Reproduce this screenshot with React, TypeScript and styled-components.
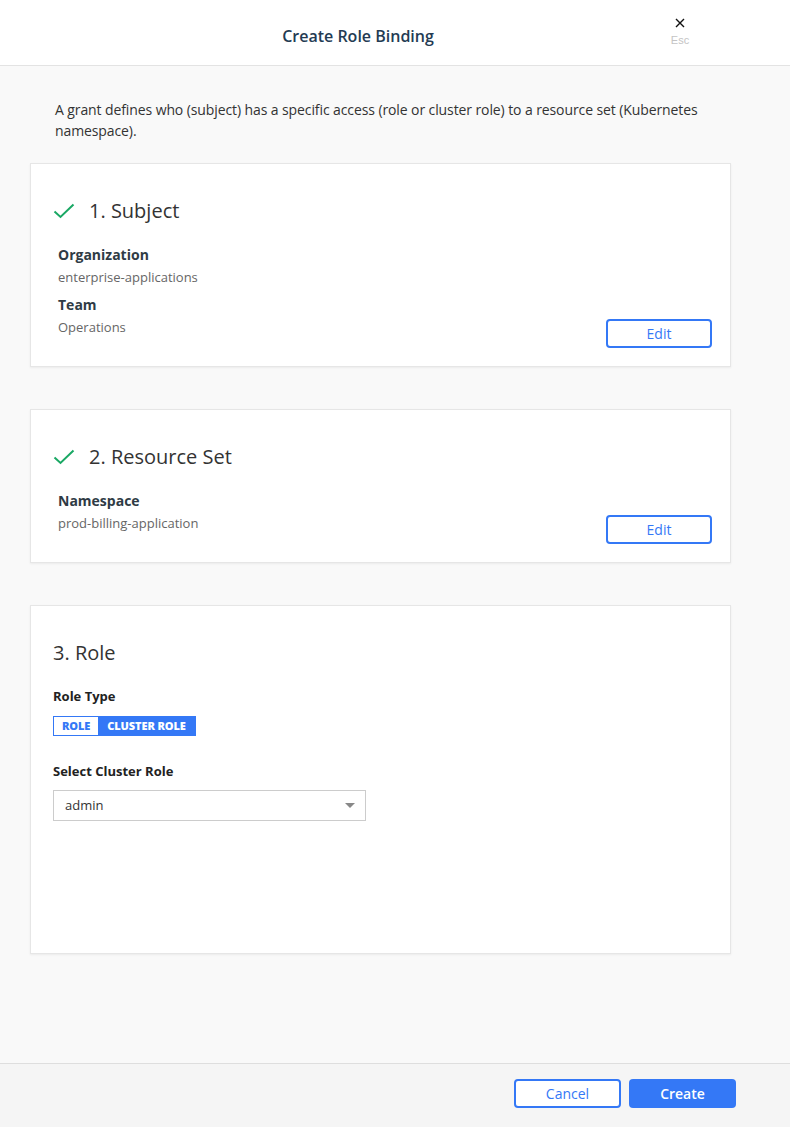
import React, { useState } from 'react';
import styled, { createGlobalStyle } from 'styled-components';

const GlobalStyle = createGlobalStyle`
  html, body {
    margin: 0;
    padding: 0;
    height: 100%;
  }

  body {
    font-family: 'Open Sans', 'Noto Sans', sans-serif;
    background-color: #f9f9f9;
    color: #333;
  }

  #root {
    height: 100%;
  }
`;

const Page = styled.div`
  height: 100vh;
  display: flex;
  flex-direction: column;
`;

const Header = styled.header`
  position: relative;
  flex: 0 0 66px;
  display: flex;
  align-items: center;
  justify-content: center;
  padding: 7px 74px 0 0;
  box-sizing: border-box;
  background-color: #fff;
  border-bottom: 1px solid #e3e3e3;
`;

const Title = styled.h1`
  margin: 0;
  font-size: 16px;
  font-weight: 600;
  color: #243b53;
`;

const CloseButton = styled.button`
  position: absolute;
  top: 18px;
  right: 95px;
  width: 30px;
  display: flex;
  flex-direction: column;
  align-items: center;
  gap: 6px;
  padding: 0;
  border: none;
  background: none;
  cursor: pointer;

  span {
    font-family: 'Liberation Sans', Arial, sans-serif;
    font-size: 11px;
    color: #c4c4c4;
  }
`;

const Main = styled.main`
  flex: 1;
  overflow: auto;
  padding: 33px 59px 40px 30px;
`;

const Intro = styled.p`
  margin: 0 0 22px 25px;
  font-size: 14px;
  line-height: 21px;
  letter-spacing: -0.1px;
  color: #333;
`;

const Cards = styled.div`
  display: flex;
  flex-direction: column;
  gap: 42px;
`;

const Card = styled.section<{ $minHeight?: number }>`
  background-color: #fff;
  border: 1px solid #e6e6e6;
  box-shadow: 0 1px 2px rgba(0, 0, 0, 0.06);
  padding: 33px 18px 18px 22px;
  min-height: ${(p) => (p.$minHeight ? `${p.$minHeight}px` : 'auto')};
  box-sizing: border-box;
`;

const StepTitle = styled.h2<{ $gapBottom?: number }>`
  margin: 0 0 ${(p) => p.$gapBottom ?? 19}px;
  display: flex;
  align-items: center;
  gap: 14px;
  font-size: 20px;
  font-weight: 400;
  line-height: 28px;
  color: #333;
`;

const CardBody = styled.div`
  display: flex;
  justify-content: space-between;
  align-items: flex-end;
  padding-left: 5px;
`;

const Fields = styled.dl`
  margin: 0 0 10px;
  display: flex;
  flex-direction: column;
`;

const FieldLabel = styled.dt`
  font-size: 14px;
  font-weight: 700;
  line-height: 22px;
  color: #2f3b45;
  margin-top: 6px;

  &:first-child {
    margin-top: 0;
  }
`;

const FieldValue = styled.dd`
  margin: 0;
  font-size: 13px;
  line-height: 22px;
  color: #666;
`;

const OutlineButton = styled.button<{ $width?: number }>`
  width: ${(p) => p.$width ?? 106}px;
  height: 29px;
  border: 2px solid #3478f6;
  border-radius: 4px;
  background-color: #fff;
  color: #3478f6;
  font-family: 'Open Sans', sans-serif;
  font-size: 14px;
  cursor: pointer;
`;

const PrimaryButton = styled.button`
  width: 107px;
  height: 29px;
  border: none;
  border-radius: 4px;
  background-color: #3478f6;
  color: #fff;
  font-family: 'Open Sans', sans-serif;
  font-size: 14px;
  font-weight: 600;
  cursor: pointer;
`;

const SectionLabel = styled.div<{ $gapTop: number; $gapBottom: number }>`
  font-size: 13px;
  font-weight: 700;
  line-height: 20px;
  color: #222;
  margin: ${(p) => p.$gapTop}px 0 ${(p) => p.$gapBottom}px;
`;

const Toggle = styled.div`
  display: inline-flex;
  border: 1px solid #3478f6;
  height: 20px;
  box-sizing: border-box;
`;

const ToggleOption = styled.button<{ $active: boolean }>`
  border: none;
  padding: 0 ${(p) => (p.$active ? 9 : 8)}px;
  font-family: 'Open Sans', sans-serif;
  font-size: 11px;
  font-weight: 800;
  letter-spacing: -0.1px;
  background-color: ${(p) => (p.$active ? '#3478f6' : '#fff')};
  color: ${(p) => (p.$active ? '#fff' : '#3478f6')};
  cursor: pointer;
`;

const SelectBox = styled.div`
  width: 313px;
  height: 31px;
  box-sizing: border-box;
  border: 1px solid #ccc;
  display: flex;
  align-items: center;
  justify-content: space-between;
  padding: 0 10px 0 11px;
  font-size: 13px;
  color: #333;
  background-color: #fff;
`;

const Caret = styled.span`
  width: 0;
  height: 0;
  border-left: 5px solid transparent;
  border-right: 5px solid transparent;
  border-top: 5px solid #888;
`;

const Footer = styled.footer`
  flex: 0 0 64px;
  display: flex;
  align-items: flex-start;
  justify-content: flex-end;
  gap: 8px;
  padding: 15px 54px 0 0;
  box-sizing: border-box;
  background-color: #f5f5f5;
  border-top: 1px solid #dedede;
`;

const Check = () => (
  <svg width="22" height="16" viewBox="0 0 22 16" fill="none">
    <path d="M1.5 8.5 L7.5 14 L20.5 1.5" stroke="#1aa864" strokeWidth="2" />
  </svg>
);

const CloseIcon = () => (
  <svg width="10" height="10" viewBox="0 0 10 10">
    <path d="M1 1 L9 9 M9 1 L1 9" stroke="#111" strokeWidth="1.4" />
  </svg>
);

export default function App() {
  const [roleType, setRoleType] = useState<'role' | 'cluster'>('cluster');

  return (
    <Page>
      <GlobalStyle />
      <Header>
        <Title>Create Role Binding</Title>
        <CloseButton>
          <CloseIcon />
          <span>Esc</span>
        </CloseButton>
      </Header>

      <Main>
        <Intro>
          A grant defines who (subject) has a specific access (role or cluster role) to a resource set (Kubernetes
          namespace).
        </Intro>

        <Cards>
          <Card>
            <StepTitle>
              <Check />
              1. Subject
            </StepTitle>
            <CardBody>
              <Fields>
                <FieldLabel>Organization</FieldLabel>
                <FieldValue>enterprise-applications</FieldValue>
                <FieldLabel>Team</FieldLabel>
                <FieldValue>Operations</FieldValue>
              </Fields>
              <OutlineButton>Edit</OutlineButton>
            </CardBody>
          </Card>

          <Card>
            <StepTitle>
              <Check />
              2. Resource Set
            </StepTitle>
            <CardBody>
              <Fields>
                <FieldLabel>Namespace</FieldLabel>
                <FieldValue>prod-billing-application</FieldValue>
              </Fields>
              <OutlineButton>Edit</OutlineButton>
            </CardBody>
          </Card>

          <Card $minHeight={349}>
            <StepTitle $gapBottom={0}>3. Role</StepTitle>
            <SectionLabel $gapTop={19} $gapBottom={7}>
              Role Type
            </SectionLabel>
            <Toggle>
              <ToggleOption $active={roleType === 'role'} onClick={() => setRoleType('role')}>
                ROLE
              </ToggleOption>
              <ToggleOption $active={roleType === 'cluster'} onClick={() => setRoleType('cluster')}>
                CLUSTER ROLE
              </ToggleOption>
            </Toggle>
            <SectionLabel $gapTop={25} $gapBottom={9}>
              Select Cluster Role
            </SectionLabel>
            <SelectBox>
              admin
              <Caret />
            </SelectBox>
          </Card>
        </Cards>
      </Main>

      <Footer>
        <OutlineButton $width={107}>Cancel</OutlineButton>
        <PrimaryButton>Create</PrimaryButton>
      </Footer>
    </Page>
  );
}
